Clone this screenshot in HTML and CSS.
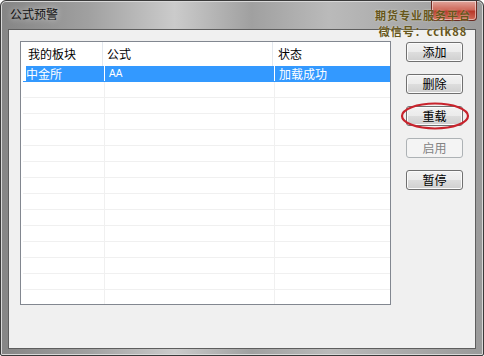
FILE: index.html
```html
<!DOCTYPE html>
<html lang="zh">
<head>
<meta charset="utf-8">
<title>公式预警</title>
<link rel="stylesheet" href="styles.css">
</head>
<body>
<div class="window">
  <div class="titlebar">
    <span class="title">公式预警</span>
    <span class="close"></span>
  </div>
  <div class="watermark">
    <div class="wm-line">期货专业服务平台</div>
    <div class="wm-line">微信号：cclk88</div>
  </div>
  <div class="client">
    <div class="list">
      <div class="row header">
        <div class="cell c1">我的板块</div>
        <div class="cell c2">公式</div>
        <div class="cell c3">状态</div>
      </div>
      <div class="row selected">
        <div class="cell c1">中金所</div>
        <div class="cell c2 latin">AA</div>
        <div class="cell c3">加载成功</div>
      </div>
      <div class="row"><div class="cell c1"></div><div class="cell c2"></div><div class="cell c3"></div></div>
      <div class="row"><div class="cell c1"></div><div class="cell c2"></div><div class="cell c3"></div></div>
      <div class="row"><div class="cell c1"></div><div class="cell c2"></div><div class="cell c3"></div></div>
      <div class="row"><div class="cell c1"></div><div class="cell c2"></div><div class="cell c3"></div></div>
      <div class="row"><div class="cell c1"></div><div class="cell c2"></div><div class="cell c3"></div></div>
      <div class="row"><div class="cell c1"></div><div class="cell c2"></div><div class="cell c3"></div></div>
      <div class="row"><div class="cell c1"></div><div class="cell c2"></div><div class="cell c3"></div></div>
      <div class="row"><div class="cell c1"></div><div class="cell c2"></div><div class="cell c3"></div></div>
      <div class="row"><div class="cell c1"></div><div class="cell c2"></div><div class="cell c3"></div></div>
      <div class="row"><div class="cell c1"></div><div class="cell c2"></div><div class="cell c3"></div></div>
      <div class="row"><div class="cell c1"></div><div class="cell c2"></div><div class="cell c3"></div></div>
      <div class="row"><div class="cell c1"></div><div class="cell c2"></div><div class="cell c3"></div></div>
      <div class="row"><div class="cell c1"></div><div class="cell c2"></div><div class="cell c3"></div></div>
      <div class="row"><div class="cell c1"></div><div class="cell c2"></div><div class="cell c3"></div></div>
    </div>
    <div class="buttons">
      <button class="btn">添加</button>
      <button class="btn">删除</button>
      <div class="marked">
        <button class="btn">重载</button>
        <svg class="ring" width="70" height="30" viewBox="0 0 70 30"><ellipse cx="35" cy="15" rx="33" ry="12.5" fill="none" stroke="#c8232c" stroke-width="2.2"/></svg>
      </div>
      <button class="btn" disabled>启用</button>
      <button class="btn">暂停</button>
    </div>
  </div>
</div>
</body>
</html>
```

FILE: styles.css
```css
* { box-sizing: border-box; }
html, body { margin: 0; padding: 0; }
body {
  width: 484px;
  height: 356px;
  overflow: hidden;
  font-family: "Noto Sans CJK SC", "Liberation Sans", sans-serif;
  font-size: 12px;
}
.window {
  position: relative;
  width: 484px;
  height: 356px;
  border: 1px solid #3a3a3a;
  border-radius: 6px 6px 2px 2px;
  background: linear-gradient(to right, #858585 0%, #a0a0a0 18%, #cbcbcb 36%, #a0a0a0 52%, #bababa 68%, #9a9a9a 100%);
  display: flex;
  flex-direction: column;
  padding: 0 7px 6px 7px;
  box-shadow: inset 0 0 0 1px #d8d8d8;
}
.titlebar {
  height: 28px;
  flex: none;
  display: flex;
  align-items: flex-start;
  justify-content: space-between;
}
.title {
  margin-top: 5px;
  margin-left: 2px;
  color: #111;
  font-size: 12px;
  line-height: 16px;
  text-shadow: 0 0 6px rgba(255,255,255,0.7);
}
.close {
  width: 46px;
  height: 20px;
  margin-right: -1px;
  border: 1px solid #6b2a22;
  border-top: none;
  border-radius: 0 0 4px 4px;
  background: linear-gradient(to bottom, #e0a59c 0%, #cf6a5c 45%, #b8382a 55%, #d26a58 100%);
  box-shadow: inset 0 0 0 1px rgba(255,255,255,0.5);
}
.watermark {
  position: absolute;
  left: 372px;
  top: 6px;
  width: 100px;
  display: flex;
  flex-direction: column;
  align-items: center;
  color: #66561c;
  font-weight: bold;
  text-shadow: 0 0 2px rgba(255,255,230,0.6);
}
.wm-line {
  font-size: 11px;
  line-height: 16px;
  letter-spacing: 1px;
  white-space: nowrap;
}
.client {
  flex: 1;
  background: #f0f0f0;
  border: 1px solid #5e5e5e;
  display: flex;
  align-items: flex-start;
  padding: 11px 0 0 11px;
  gap: 15px;
}
.list {
  width: 371px;
  height: 264px;
  border: 1px solid #828790;
  background: #fff;
  overflow: hidden;
}
.row {
  display: grid;
  grid-template-columns: 82px 170px 1fr;
  height: 16px;
  border-bottom: 1px solid #f0f0f0;
  margin-left: 2px;
}
.row.header {
  height: 24px;
  margin-left: 0;
  border-bottom: none;
  background: #fff;
}
.cell {
  border-right: 1px solid #f0f0f0;
  line-height: 15px;
  white-space: nowrap;
  overflow: hidden;
}
.header .cell {
  border-right: 1px solid #e3e8ee;
  line-height: 24px;
  color: #000;
}
.header .c1 { padding-left: 7px; }
.header .c2 { padding-left: 4px; }
.header .c3 { padding-left: 5px; }
.header .c3 { border-right: none; }
.row .c3 { border-right: none; }
.selected {
  border-bottom-color: #3399ff;
}
.selected .cell {
  background: #3399ff;
  color: #fff;
  border-right-color: #fff;
}
.selected .c1 {
  background: linear-gradient(to right, #fff 3px, #3399ff 3px);
  padding-left: 3px;
}
.selected .c2 { padding-left: 4px; }
.selected .c3 { padding-left: 4px; }
.latin {
  font-family: "Liberation Sans", sans-serif;
  font-size: 10px;
}
.buttons {
  display: flex;
  flex-direction: column;
  gap: 12px;
  width: 57px;
  padding-top: 1px;
}
.btn {
  width: 57px;
  height: 20px;
  padding: 0;
  border: 1px solid #707070;
  border-radius: 3px;
  background: linear-gradient(to bottom, #f2f2f2 0%, #ebebeb 50%, #dddddd 51%, #cfcfcf 100%);
  box-shadow: inset 0 0 0 1px #fbfbfb;
  font-family: "Noto Sans CJK SC", sans-serif;
  font-size: 12px;
  line-height: 16px;
  color: #000;
}
.btn:disabled {
  border-color: #adb2b5;
  background: #f4f4f4;
  box-shadow: none;
  color: #838383;
}
.marked {
  position: relative;
  height: 20px;
}
.ring {
  position: absolute;
  left: -6px;
  top: -5px;
}
```
